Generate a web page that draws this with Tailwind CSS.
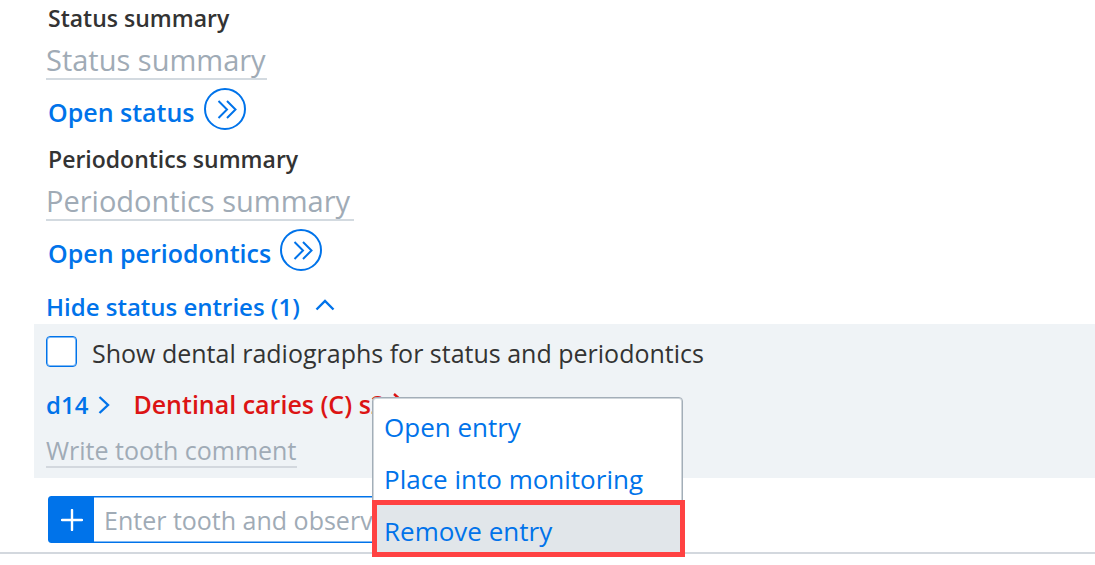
<!DOCTYPE html>
<html lang="en">
<head>
  <meta charset="UTF-8">
  <meta name="viewport" content="width=device-width, initial-scale=1.0">
  <title>Status summary</title>
  <script src="https://cdn.jsdelivr.net/npm/@tailwindcss/browser@4"></script>
</head>
<body class="min-h-screen bg-white font-['Open_Sans','Noto_Sans',sans-serif] text-[25px] text-[#333333]">
  <main class="min-h-screen">
    <section class="h-[141px] pl-[46px]">
      <label for="status" class="block pl-[2px] h-9 leading-9 text-[23px] font-semibold">Status summary</label>
      <input id="status" type="text" placeholder="Status summary" class="block w-[221px] h-11 pt-1 text-[29px] border-b-2 border-[#d3dae0] placeholder:text-[#a0abb6] outline-none">
      <a href="#" class="flex w-fit gap-[9px] pt-2 pl-[2px] text-[#0073ea] font-semibold">
        <span class="pt-2 leading-8">Open status</span>
        <svg class="size-[42px]" viewBox="0 0 42 42" fill="none" stroke="currentColor" stroke-width="2">
          <circle cx="21" cy="21" r="20"/>
          <path d="M14.500 13l8.500 8.500-8.500 8.500M23 13l8.500 8.500-8.500 8.500"/>
        </svg>
      </a>
    </section>

    <section class="h-[141px] pl-[46px]">
      <label for="perio" class="block pl-[2px] h-9 leading-9 text-[23px] font-semibold">Periodontics summary</label>
      <input id="perio" type="text" placeholder="Periodontics summary" class="block w-[308px] h-11 pt-1 text-[29px] border-b-2 border-[#d3dae0] placeholder:text-[#a0abb6] outline-none">
      <a href="#" class="flex w-fit gap-[9px] pt-2 pl-[2px] text-[#0073ea] font-semibold">
        <span class="pt-2 leading-8">Open periodontics</span>
        <svg class="size-[42px]" viewBox="0 0 42 42" fill="none" stroke="currentColor" stroke-width="2">
          <circle cx="21" cy="21" r="20"/>
          <path d="M14.500 13l8.500 8.500-8.500 8.500M23 13l8.500 8.500-8.500 8.500"/>
        </svg>
      </a>
    </section>

    <button type="button" class="flex items-center gap-[15px] h-[42px] pt-2 pl-[46px] text-2xl text-[#0073ea] font-semibold">
      Hide status entries (1)
      <svg class="w-5 h-3 mb-1" viewBox="0 0 20 12" fill="none" stroke="currentColor" stroke-width="2.4"><path d="M1.5 10.5L10 2l8.5 8.5"/></svg>
    </button>

    <section class="ml-[34px] pl-3 pt-3 pb-[10px] bg-[#eff3f6]">
      <div class="flex items-center gap-[15px] h-[31px]">
        <input id="radiographs" type="checkbox" class="appearance-none size-[31px] rounded-[4px] border border-[#0073ea] inset-ring inset-ring-[#80b9f4] bg-white">
        <label for="radiographs" class="pt-1">Show dental radiographs for status and periodontics</label>
      </div>

      <div class="relative flex items-center h-9 mt-5 font-semibold">
        <a href="#" class="flex items-center gap-[10px] text-2xl text-[#0073ea]">
          d14
          <svg class="w-3 h-5" viewBox="0 0 12 20" fill="none" stroke="currentColor" stroke-width="2.4"><path d="M1.5 2L10 10l-8.5 8"/></svg>
        </a>
        <a href="#" class="flex items-center gap-2 ml-[23px] text-[#dc1414]">
          Dentinal caries (C) s2
          <svg class="w-3 h-6" viewBox="0 0 12 24" fill="none" stroke="currentColor" stroke-width="2.4"><path d="M1 1l9 8-9 8"/></svg>
        </a>

        <!-- entry context menu -->
        <div class="absolute left-[326px] top-[10px] z-10 w-[313px] h-[160px] font-normal text-[26px] text-[#0073ea]">
          <div class="flex flex-col h-full mr-[2px] bg-white border border-[#a3aeb8] inset-ring inset-ring-[#d0d6db] rounded-[4px]">
            <button type="button" class="h-[52px] pl-[11px] pt-[6px] text-left">Open entry</button>
            <button type="button" class="h-[52px] pl-[11px] pt-[6px] text-left">Place into monitoring</button>
          </div>
          <button type="button" class="absolute left-0 bottom-0 w-full h-[57px] pl-[7px] pt-[6px] text-left bg-[#e1e6ea] border-5 border-[#ff4242]">Remove entry</button>
        </div>
      </div>

      <input type="text" aria-label="Tooth comment" placeholder="Write tooth comment" class="block w-[251px] h-9 mt-[9px] pt-1 border-b-2 border-[#d3d8de] placeholder:text-[#a0abb6] outline-none">
    </section>

    <div class="flex w-[500px] h-[47px] mt-[18px] ml-12 border border-[#0073ea] inset-ring inset-ring-[#80b9f4] rounded-[3px] bg-white">
      <button type="button" aria-label="Add" class="flex items-center justify-center w-[45px] bg-[#0073ea] text-white">
        <svg class="size-[22px]" viewBox="0 0 22 22" fill="none" stroke="currentColor" stroke-width="2.4" stroke-linecap="round"><path d="M11 1v20M1 11h20"/></svg>
      </button>
      <input type="text" aria-label="Tooth and observation" placeholder="Enter tooth and observation" class="flex-1 min-w-0 pl-[10px] pt-[2px] placeholder:text-[#a0abb6] outline-none">
    </div>
    <hr class="mt-[9px] border-t-2 border-[#d3d8de]">
  </main>
</body>
</html>
